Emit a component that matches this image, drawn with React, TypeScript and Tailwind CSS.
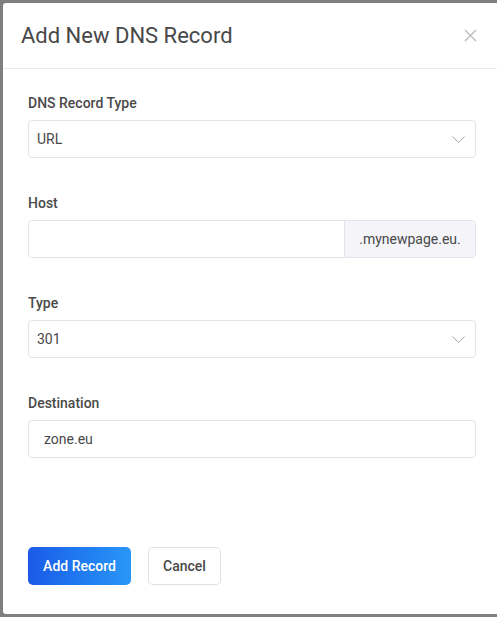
export default function App() {
  const field = "h-[38px] w-full rounded-[4px] border border-[#e3e3ec] bg-white text-[14px] text-[#484848]";
  const label = "mb-[9px] block text-[14px] leading-4 font-medium text-[#4a4a4a]";

  return (
    <div className="h-screen w-full bg-[#7f7f7f] pt-[3px] pb-[3px] pl-[3px]" style={{ fontFamily: "Roboto, 'Open Sans', sans-serif" }}>
      <div className="flex h-full flex-col rounded-l-[3px] bg-white">
        {/* header */}
        <div className="flex h-[66px] items-center justify-between border-b border-[#e9e9f0] pl-[18px] pr-[20px]">
          <h2 className="text-[22px] font-normal text-[#484848]">Add New DNS Record</h2>
          <button className="text-[#bbb]">
            <svg width="13" height="13" viewBox="0 0 13 13" fill="none" stroke="currentColor" strokeWidth="1.4">
              <path d="M1 1l11 11M12 1L1 12" />
            </svg>
          </button>
        </div>

        {/* body */}
        <div className="flex flex-1 flex-col px-[25px] pt-[26px] pr-[21px]">
          <div className="mb-[37px]">
            <label className={label}>DNS Record Type</label>
            <div className={`${field} flex items-center justify-between pl-[8px] pr-[10px]`}>
              <span>URL</span>
              <svg width="13" height="7" viewBox="0 0 13 7" fill="none" stroke="#a8a8b0" strokeWidth="1">
                <path d="M0.5 0.5l6 6 6-6" />
              </svg>
            </div>
          </div>

          <div className="mb-[37px]">
            <label className={label}>Host</label>
            <div className="flex h-[38px] w-full rounded-[4px] border border-[#e3e3ec] text-[14px]">
              <input className="min-w-0 flex-1 rounded-l-[4px] bg-white px-[15px] outline-none" />
              <span className="flex w-[131px] items-center justify-center rounded-r-[4px] border-l border-[#e3e3ec] bg-[#f5f5f9] text-[#484848]">
                .mynewpage.eu.
              </span>
            </div>
          </div>

          <div className="mb-[37px]">
            <label className={label}>Type</label>
            <div className={`${field} flex items-center justify-between pl-[8px] pr-[10px]`}>
              <span>301</span>
              <svg width="13" height="7" viewBox="0 0 13 7" fill="none" stroke="#a8a8b0" strokeWidth="1">
                <path d="M0.5 0.5l6 6 6-6" />
              </svg>
            </div>
          </div>

          <div>
            <label className={label}>Destination</label>
            <input className={`${field} px-[15px] outline-none`} defaultValue="zone.eu" />
          </div>

          <div className="mt-[89px] flex gap-[17px]">
            <button className="h-[38px] w-[103px] rounded-[5px] bg-gradient-to-r from-[#1d5ae8] to-[#2a96f7] text-[14px] font-medium text-white">
              Add Record
            </button>
            <button className="h-[38px] w-[73px] rounded-[5px] border border-[#e0e0ea] bg-white text-[14px] font-medium text-[#484848]">
              Cancel
            </button>
          </div>
        </div>
      </div>
    </div>
  );
}
